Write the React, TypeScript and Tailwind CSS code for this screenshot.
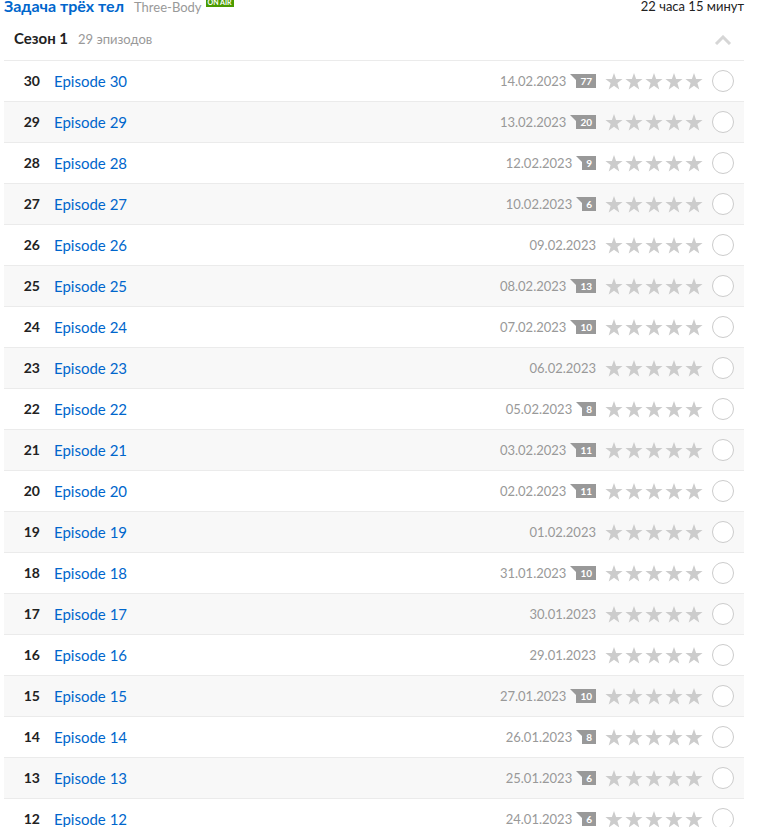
interface Episode {
  number: number
  date: string
  comments?: number
}

const episodes: Episode[] = [
  { number: 30, date: '14.02.2023', comments: 77 },
  { number: 29, date: '13.02.2023', comments: 20 },
  { number: 28, date: '12.02.2023', comments: 9 },
  { number: 27, date: '10.02.2023', comments: 6 },
  { number: 26, date: '09.02.2023' },
  { number: 25, date: '08.02.2023', comments: 13 },
  { number: 24, date: '07.02.2023', comments: 10 },
  { number: 23, date: '06.02.2023' },
  { number: 22, date: '05.02.2023', comments: 8 },
  { number: 21, date: '03.02.2023', comments: 11 },
  { number: 20, date: '02.02.2023', comments: 11 },
  { number: 19, date: '01.02.2023' },
  { number: 18, date: '31.01.2023', comments: 10 },
  { number: 17, date: '30.01.2023' },
  { number: 16, date: '29.01.2023' },
  { number: 15, date: '27.01.2023', comments: 10 },
  { number: 14, date: '26.01.2023', comments: 8 },
  { number: 13, date: '25.01.2023', comments: 6 },
  { number: 12, date: '24.01.2023', comments: 6 },
]

function CommentBadge({ count }: { count: number }) {
  return (
    <a href="#comments" aria-label={`Комментарии: ${count}`} className="flex h-3.5 text-[10px] leading-[14px] text-white">
      <svg width="6" height="14" viewBox="0 0 6 14" fill="#999" aria-hidden="true">
        <path d="M0 0h6v6z" />
      </svg>
      <span className="bg-[#999] px-1 font-bold">{count}</span>
    </a>
  )
}

function Rating({ episode }: { episode: number }) {
  return (
    <div role="group" aria-label={`Оценка эпизода ${episode}`} className="flex">
      {[1, 2, 3, 4, 5].map((value) => (
        <button key={value} type="button" aria-label={`${value} из 5`} className="flex w-5 justify-center">
          <svg width="18" height="17" viewBox="0 0 18 17" fill="#ccc" aria-hidden="true">
            <path d="M9 0l2.1 6.1H17.6l-5.2 4 1.9 6.4L9 12.7l-5.3 3.8 1.9-6.4L.4 6.1h6.5z" />
          </svg>
        </button>
      ))}
    </div>
  )
}

function EpisodeRow({ number, date, comments }: Episode) {
  return (
    <tr className="h-[41px] even:bg-[#f8f8f8] [&>*]:border-b [&>*]:border-[#ebebeb]">
      <th scope="row" className="w-9 p-0 text-right text-sm font-bold text-[#222]">
        {number}
      </th>
      <td className="p-0 pl-3.5">
        <a href={`#episode-${number}`} className="text-[15px] text-[#0066cc]">
          Episode {number}
        </a>
      </td>
      <td className="p-0">
        <div className="flex items-center justify-end">
          <span className="text-[13px] leading-5 text-[#999]">{date}</span>
          {comments !== undefined && (
            <span className="ml-1">
              <CommentBadge count={comments} />
            </span>
          )}
        </div>
      </td>
      <td className="w-[108px] p-0 pl-2">
        <Rating episode={number} />
      </td>
      <td className="w-10 p-0 pl-2">
        <input
          type="checkbox"
          aria-label={`Эпизод ${number} просмотрен`}
          className="block size-[22px] appearance-none rounded-full border border-[#ccc] bg-white checked:bg-[#0066cc]"
        />
      </td>
    </tr>
  )
}

export default function App() {
  return (
    <main className="h-screen overflow-hidden bg-white pr-4 pl-1 font-['Lato','Noto_Sans',sans-serif] text-[#222]">
      <header className="flex h-5 items-start justify-between">
        <div className="flex items-baseline">
          <h1 className="text-base leading-3 font-bold">
            <a href="#show" className="text-[#0066cc]">
              Задача трёх тел
            </a>
          </h1>
          <span className="relative ml-2.5 text-[13px] leading-3 text-[#999]">
            Three-Body
            {/* status flag hangs above the baseline of the original title */}
            <span className="absolute bottom-1.5 left-full ml-1 bg-[#4a9b00] px-0.5 text-[7px] leading-2.5 font-bold whitespace-nowrap text-white">
              ON AIR
            </span>
          </span>
        </div>
        <span className="text-[13px] leading-3">22 часа 15 минут</span>
      </header>

      <section>
        <div className="flex h-[41px] items-center justify-between border-b border-[#ebebeb] pr-3 pl-2.5">
          <div className="flex items-baseline gap-2.5 pb-1">
            <h2 className="text-[15px] font-bold">Сезон 1</h2>
            <span className="text-[13px] text-[#999]">29 эпизодов</span>
          </div>
          <button type="button" aria-label="Свернуть сезон">
            <svg width="18" height="10" viewBox="0 0 18 10" fill="none" stroke="#d6d6d6" strokeWidth="3" aria-hidden="true">
              <path d="M2 9l7-7 7 7" />
            </svg>
          </button>
        </div>
        <table className="w-full border-separate border-spacing-0">
          <tbody>
            {episodes.map((episode) => (
              <EpisodeRow key={episode.number} {...episode} />
            ))}
          </tbody>
        </table>
      </section>
    </main>
  )
}
